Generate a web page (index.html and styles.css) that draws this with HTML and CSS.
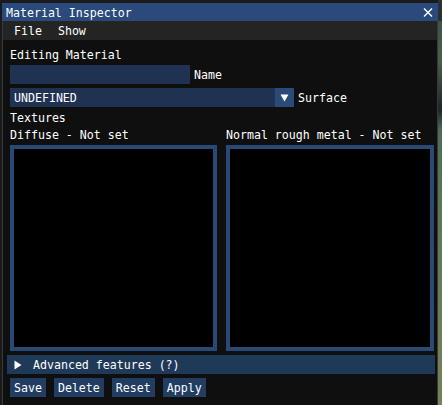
FILE: index.html
```html
<!DOCTYPE html>
<html>
<head>
<meta charset="utf-8">
<link rel="stylesheet" href="styles.css">
</head>
<body>
<div class="desk">
  <div class="gutter-l"></div>
  <div class="window">
    <div class="titlebar">
      <span class="title">Material Inspector</span>
      <svg class="close" width="10" height="9" viewBox="0 0 10 9"><path d="M1 0.5 L9 8.5 M9 0.5 L1 8.5" stroke="#fff" stroke-width="1.4" fill="none"/></svg>
    </div>
    <div class="menubar"><span class="menu">File</span><span class="menu">Show</span></div>
    <div class="content">
      <div class="line">Editing Material</div>
      <div class="row"><div class="input"></div><span class="label">Name</span></div>
      <div class="row">
        <div class="combo"><span class="combo-text">UNDEFINED</span><div class="arrow"><svg width="9" height="8" viewBox="0 0 9 8"><path d="M0.5 0.5 H8.5 L4.5 7.5 Z" fill="#fff"/></svg></div></div>
        <span class="label">Surface</span>
      </div>
      <div class="line">Textures</div>
      <div class="textures">
        <div class="tex-col"><div class="line">Diffuse - Not set</div><div class="tex-box"></div></div>
        <div class="tex-col"><div class="line">Normal rough metal - Not set</div><div class="tex-box"></div></div>
      </div>
      <div class="header"><svg class="tri" width="8" height="10" viewBox="0 0 8 10"><path d="M0.5 0.5 L7.5 5 L0.5 9.5 Z" fill="#fff"/></svg><span class="label">Advanced features (?)</span></div>
      <div class="buttons">
        <div class="btn">Save</div>
        <div class="btn">Delete</div>
        <div class="btn">Reset</div>
        <div class="btn">Apply</div>
      </div>
    </div>
  </div>
  <div class="gutter-r"></div>
</div>
</body>
</html>
```
FILE: styles.css
```css
html, body {
  margin: 0;
  padding: 0;
  background: #1b1b1b;
}
body {
  font-family: "DejaVu Sans Mono", "Liberation Mono", monospace;
  font-size: 11.6px;
  color: #ffffff;
  width: 442px;
  height: 405px;
  overflow: hidden;
}
.desk {
  display: flex;
  height: 405px;
}
.gutter-l {
  width: 2px;
  background: #1a1a1a;
}
.gutter-r {
  width: 4px;
  background: linear-gradient(#2a2f33 0px, #2a2f33 20px, #3e5246 22px, #4a5f4a 60px, #1e2428 110px, #506a5a 130px, #5f7455 200px, #6a7b58 300px, #738356 405px);
}
.window {
  width: 436px;
  margin-top: 3px;
  display: flex;
  flex-direction: column;
  background: #0f0f0f;
}
.titlebar {
  height: 18px;
  background: #294a7a;
  display: flex;
  align-items: center;
  justify-content: space-between;
  padding: 0 4px 0 4px;
  line-height: 13px;
}
.title {
  padding-top: 2px;
}
.close {
  margin-right: 1px;
  margin-top: 1px;
}
.menubar {
  height: 19px;
  background: #242424;
  border-left: 1px solid #38383d;
  border-right: 1px solid #38383d;
  display: flex;
  align-items: center;
  gap: 16px;
  padding-left: 11px;
  line-height: 13px;
}
.menu {
  padding-top: 2px;
}
.content {
  flex: 1;
  border-left: 1px solid #38383d;
  border-right: 1px solid #38383d;
  padding: 8px 0 0 7px;
  display: flex;
  flex-direction: column;
  gap: 4px;
}
.line {
  height: 13px;
  line-height: 15px;
  white-space: pre;
}
.row {
  display: flex;
  align-items: center;
  gap: 4px;
  height: 19px;
}
.label {
  line-height: 13px;
  padding-top: 2px;
}
.input {
  width: 180px;
  height: 19px;
  background: #1f3251;
}
.combo {
  width: 284px;
  height: 19px;
  background: #1f3251;
  display: flex;
  align-items: center;
  justify-content: space-between;
}
.combo-text {
  padding-left: 4px;
  padding-top: 2px;
  line-height: 13px;
}
.arrow {
  width: 19px;
  height: 19px;
  background: #2a4b78;
  display: flex;
  align-items: center;
  justify-content: center;
}
.textures {
  display: grid;
  grid-template-columns: 207px 208px;
  column-gap: 9px;
}
.tex-col {
  display: flex;
  flex-direction: column;
  gap: 4px;
}
.tex-box {
  height: 198px;
  background: #000000;
  border: 4px solid #2a4a76;
}
.header {
  margin-left: -3px;
  width: 428px;
  height: 19px;
  background: #1f3958;
  display: flex;
  align-items: center;
}
.tri {
  margin-left: 7px;
  margin-right: 11px;
}
.buttons {
  display: flex;
  gap: 8px;
}
.btn {
  height: 19px;
  line-height: 21px;
  padding: 0 4px;
  background: #213d62;
}
```
